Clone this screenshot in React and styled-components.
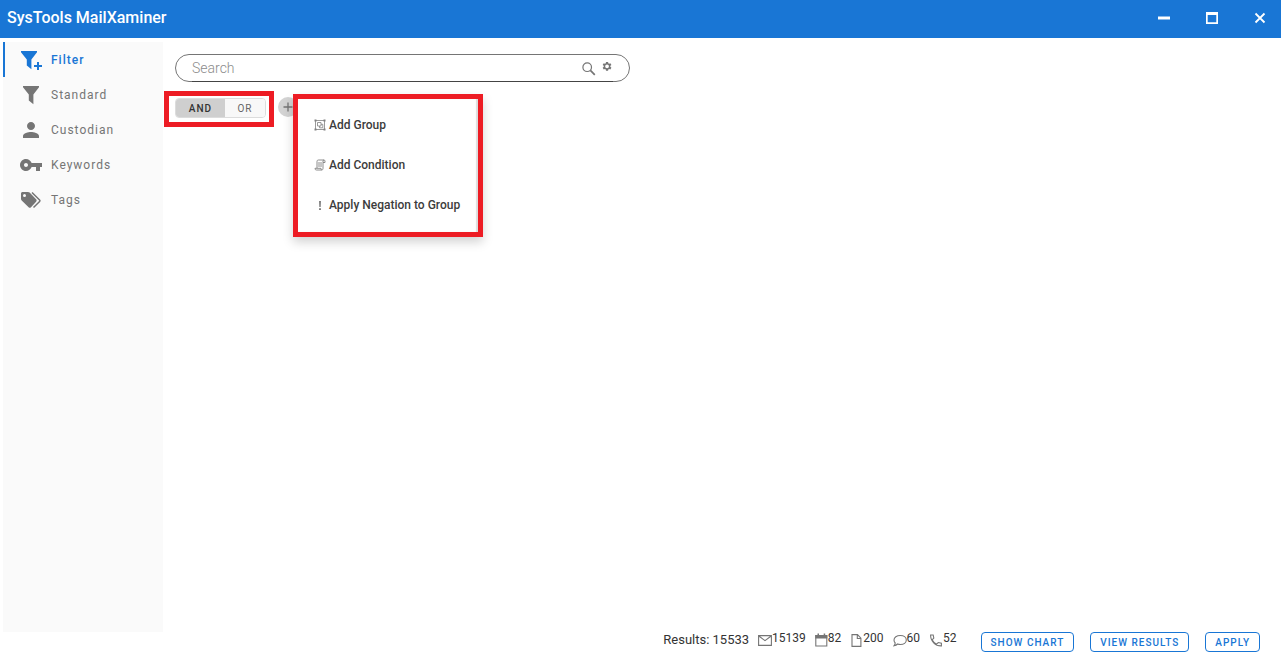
import { useState } from "react";
import styled, { createGlobalStyle } from "styled-components";

const GlobalStyle = createGlobalStyle`
  * {
    box-sizing: border-box;
  }

  body {
    margin: 0;
    background: #fff;
    color: #333;
    font-family: Roboto, "Liberation Sans", sans-serif;
    font-size: 12px;
  }

  button,
  input {
    font-family: inherit;
  }
`;

const Page = styled.div`
  display: flex;
  flex-direction: column;
  min-height: 100vh;
`;

const TitleBar = styled.header`
  display: flex;
  justify-content: space-between;
  align-items: center;
  height: 38px;
  padding: 0 9px 2px 7px;
  background: #1976d5;
  color: #fff;
`;

const Title = styled.h1`
  margin: 0;
  font-size: 16px;
  font-weight: 500;
  line-height: 24px;
`;

const WindowControls = styled.div`
  display: flex;
  gap: 24px;
`;

const IconButton = styled.button`
  display: flex;
  justify-content: center;
  align-items: center;
  width: ${({ $size }) => $size || 24}px;
  height: ${({ $size }) => $size || 24}px;
  padding: 0;
  border: none;
  background: none;
  color: inherit;
  cursor: pointer;
`;

const AddButton = styled(IconButton)`
  border-radius: 50%;
  background: #d3d3d3;
  color: #757575;
`;

const Body = styled.div`
  display: flex;
  flex: 1;
  padding: 4px 0 0 3px;
`;

const Sidebar = styled.nav`
  flex: none;
  width: 160px;
  background: #fafafa;
`;

const NavItem = styled.a`
  display: flex;
  align-items: center;
  gap: 8px;
  height: 35px;
  padding-left: 14px;
  border-left: 2px solid ${({ $active }) => ($active ? "#1976d5" : "transparent")};
  color: ${({ $active }) => ($active ? "#1976d5" : "#757575")};
  font-size: 12px;
  font-weight: ${({ $active }) => ($active ? 500 : 400)};
  letter-spacing: 1px;
  text-decoration: none;
`;

const Content = styled.main`
  flex: 1;
  padding: 12px 0 0 1px;
`;

const SearchBox = styled.form`
  width: 455px;
  height: 28px;
  margin-left: 11px;
  padding: 0 16px;
  border: 1px solid #757575;
  border-radius: 14px;
  color: #757575;
`;

const SearchField = styled.div`
  display: flex;
  align-items: center;
  height: 27px;
  border-bottom: 1px solid #444;
`;

const SearchInput = styled.input`
  flex: 1;
  min-width: 0;
  padding: 0;
  border: none;
  outline: none;
  background: none;
  color: #333;
  font-size: 14px;

  &::placeholder {
    color: #8c8c8c;
    font-weight: 300;
    opacity: 1;
  }
`;

const GroupRow = styled.div`
  position: relative;
  display: flex;
  gap: 4px;
  margin-top: 9px;
`;

const Highlight = styled.div`
  border: 5px solid #ed1c24;
`;

const ToggleHighlight = styled(Highlight)`
  height: 36px;
  padding: 2px 3px 4px 6px;
`;

const ToggleGroup = styled.div`
  display: flex;
  height: 20px;
  border: 1px solid #dcdcdc;
  border-radius: 4px;
  overflow: hidden;
`;

const Toggle = styled.button`
  width: ${({ $width }) => $width}px;
  padding: 0;
  border: none;
  background: ${({ $on }) => ($on ? "#cfcfcf" : "#f8f8f8")};
  color: ${({ $on }) => ($on ? "#333" : "#666")};
  font-size: 10px;
  font-weight: ${({ $on }) => ($on ? 500 : 400)};
  letter-spacing: 1px;
  cursor: pointer;
`;

const AddSlot = styled.div`
  padding-top: 6px;
`;

const Menu = styled(Highlight)`
  position: absolute;
  top: 3px;
  left: 129px;
  width: 190px;
  padding: 6px 2px 7px 0;
  background: #fff;
  box-shadow:
    inset -2px 0 1px #ddd,
    0 5px 10px rgba(0, 0, 0, 0.18);
`;

const MenuItem = styled.button`
  display: flex;
  align-items: center;
  gap: 3px;
  width: 100%;
  height: 40px;
  padding: 0 0 0 16px;
  border: none;
  background: none;
  color: #3c3c3c;
  font-size: 12px;
  font-weight: 500;
  text-align: left;
  white-space: nowrap;
  cursor: pointer;

  svg {
    color: #808080;
  }
`;

const Footer = styled.footer`
  display: flex;
  justify-content: flex-end;
  height: 36px;
  padding-right: 21px;
`;

const Results = styled.div`
  display: flex;
  gap: 9px;
  margin-right: 24px;
  font-size: 13px;
  line-height: 16px;
`;

const Count = styled.span`
  display: flex;
  font-size: 12px;
  line-height: 12px;

  svg {
    margin-top: 1px;
    color: #757575;
  }
`;

const Actions = styled.div`
  display: flex;
  align-items: flex-start;
  gap: 16px;
`;

const ActionButton = styled.button`
  height: 20px;
  padding: 0 9px;
  border: 1px solid #1976d5;
  border-radius: 4px;
  background: #fff;
  color: #1976d5;
  font-size: 10px;
  font-weight: 500;
  letter-spacing: 1px;
  cursor: pointer;
`;

const Svg = styled.svg`
  flex: none;
`;

function Icon({ size = 24, width, box = "0 0 24 24", fill = "currentColor", children, ...rest }) {
  return (
    <Svg
      width={width || size}
      height={size}
      viewBox={box}
      fill={fill}
      aria-hidden="true"
      {...rest}
    >
      {children}
    </Svg>
  );
}

const FUNNEL = "M0 0h16v1.3l-5.6 7.2V18.2L5.8 14.5V8.5L0 1.3z";

const navItems = [
  {
    label: "Filter",
    icon: (
      <>
        <path d={FUNNEL} transform="translate(2 3)" />
        <path d="M18 14h2v3h3v2h-3v3h-2v-3h-3v-2h3z" />
      </>
    ),
  },
  { label: "Standard", icon: <path d={FUNNEL} transform="translate(4 3)" /> },
  {
    label: "Custodian",
    icon: (
      <path d="M12 12c2.2 0 4-1.8 4-4s-1.8-4-4-4-4 1.8-4 4 1.8 4 4 4zm0 2c-2.7 0-8 1.3-8 4v2h16v-2c0-2.7-5.3-4-8-4z" />
    ),
  },
  {
    label: "Keywords",
    icon: (
      <path d="M12.65 10C11.83 7.67 9.61 6 7 6c-3.31 0-6 2.69-6 6s2.69 6 6 6c2.61 0 4.83-1.67 5.65-4H17v4h4v-4h2v-4H12.65zM7 14c-1.1 0-2-.9-2-2s.9-2 2-2 2 .9 2 2-.9 2-2 2z" />
    ),
  },
  {
    label: "Tags",
    icon: (
      <>
        <path
          fillRule="evenodd"
          d="M2 5.5C2 4.7 2.7 4 3.5 4H9c.6 0 1.2.2 1.600.6l6.500 6.700c.7.7.7 1.700 0 2.400L12 19.200c-.7.7-1.700.7-2.400 0L2.700 12.600c-.4-.4-.7-1-.7-1.600zM5.500 6a1.500 1.500 0 1 0 0 3 1.500 1.500 0 0 0 0-3z"
        />
        <path
          d="M13 4.500l7.600 7.500c.5.500.5 1 0 1.500L14.500 19.500"
          fill="none"
          stroke="currentColor"
          strokeWidth="1.5"
        />
      </>
    ),
  },
];

const menuItems = [
  {
    label: "Add Group",
    icon: (
      <g fill="none" stroke="currentColor">
        <path d="M1.5 1v10M10.5 1v10M2 1.5h8M2 10.5h8" strokeWidth=".8" />
        <path d="M3.5 3.5H7V7H3.500zM5.500 7v1.800h3.300V5.300H7" strokeWidth=".8" />
        <path d="M.5 1.500h2M9.500 1.500h2M.5 10.500h2M9.500 10.500h2" strokeWidth="1.8" />
      </g>
    ),
  },
  {
    label: "Add Condition",
    icon: (
      <g fill="none" stroke="currentColor" strokeWidth=".9">
        <path d="M3 9V2.500C3 1.500 3.500 1 4.500 1h5.500c.7 0 1 .5 1 1v1.500H9" />
        <path d="M9 3.500V9.500c0 1-.5 1.500-1.500 1.500H2.500C1.500 11 1 10.500 1 9.300h6c0 1 .3 1.700 1 1.700" />
        <path d="M9 3.500V2c0-.5.3-1 1-1M5 3v5M7 3v5" />
      </g>
    ),
  },
  {
    label: "Apply Negation to Group",
    icon: <path d="M5 2h2L6.700 8H5.300zM5 9.200h2V11H5z" />,
  },
];

const counts = [
  {
    label: "Emails",
    value: 15139,
    width: 14,
    icon: <path d="M.6 2.600h12.800v9.800H.6zM.8 3l6.200 4.600L13.200 3" />,
  },
  {
    label: "Events",
    value: 82,
    width: 13,
    icon: (
      <>
        <path d="M.8 2.500h11v10.500H.8z" />
        <path
          d="M.3 2h12v3.500H.3zM2.500 0.500h1.500V2H2.500zM8.700 0.500h1.500V2H8.700z"
          fill="currentColor"
          stroke="none"
        />
      </>
    ),
  },
  {
    label: "Documents",
    value: 200,
    width: 13,
    icon: <path d="M2 1.600h5.500l3.400 3.600v8.200H2zM7.300 1.600v3.900h3.600" />,
  },
  {
    label: "Chats",
    value: 60,
    width: 14,
    icon: (
      <path d="M7.300 2.500c3.500 0 6 1.900 6 4.500s-2.500 4.500-6 4.500c-1 0-1.900-.2-2.700-.5-.8.8-2 1.500-3.600 1.800.7-.8 1.100-1.700 1.200-2.800C1.400 9.200 1 8.200 1 7c0-2.600 2.700-4.500 6.300-4.500z" />
    ),
  },
  {
    label: "Calls",
    value: 52,
    width: 14,
    icon: (
      <path d="M1.600 2h2.600l.6 3.100-1.700 1.700c1 2 2.300 3.400 4.400 4.400l1.800-1.700 3.100.6v2.800c-6 .3-11-5-10.800-10.900z" />
    ),
  },
];

export default function App() {
  const [operator, setOperator] = useState("AND");
  const [query, setQuery] = useState("");

  return (
    <Page>
      <GlobalStyle />
      <TitleBar>
        <Title>SysTools MailXaminer</Title>
        <WindowControls>
          <IconButton aria-label="Minimize">
            <Icon>
              <path d="M6 10.500h12v3H6z" />
            </Icon>
          </IconButton>
          <IconButton aria-label="Maximize">
            <Icon>
              <path fillRule="evenodd" d="M6 6h12v12H6zM7.700 9v7.300h8.600V9z" />
            </Icon>
          </IconButton>
          <IconButton aria-label="Close">
            <Icon fill="none" stroke="currentColor" strokeWidth="1.8">
              <path d="M7.500 7.500l9 9M16.500 7.500l-9 9" />
            </Icon>
          </IconButton>
        </WindowControls>
      </TitleBar>

      <Body>
        <Sidebar>
          {navItems.map(({ label, icon }) => (
            <NavItem key={label} href={`#${label.toLowerCase()}`} $active={label === "Filter"}>
              <Icon>{icon}</Icon>
              {label}
            </NavItem>
          ))}
        </Sidebar>

        <Content>
          <SearchBox role="search" onSubmit={(e) => e.preventDefault()}>
            <SearchField>
              <SearchInput
                aria-label="Search"
                placeholder="Search"
                value={query}
                onChange={(e) => setQuery(e.target.value)}
              />
              <IconButton type="submit" aria-label="Run search">
                <Icon size={16} box="0 0 16 16" fill="none" stroke="currentColor">
                  <circle cx="6.200" cy="7.200" r="4.300" strokeWidth="1.200" />
                  <path d="M9.400 10.400l4.400 4.400" strokeWidth="1.700" />
                </Icon>
              </IconButton>
              <IconButton $size={12} type="button" aria-label="Search settings">
                <Icon size={14} width={12} box="0 0 24 28">
                  <path
                    fillRule="evenodd"
                    transform="translate(2 1) scale(.84)"
                    d="M9.500 1h5l.5 3.200 1.900 1.100 3-1.200 2.500 4.300-2.600 2v2.200l2.600 2-2.500 4.300-3-1.200-1.900 1.100-.5 3.200h-5L9 18.800l-1.900-1.100-3 1.200-2.500-4.300 2.600-2v-2.200l-2.600-2 2.500-4.300 3 1.200L9 4.200zM12 7a4.500 4.500 0 1 0 0 9 4.500 4.500 0 0 0 0-9z"
                  />
                </Icon>
              </IconButton>
            </SearchField>
          </SearchBox>

          <GroupRow>
            <ToggleHighlight>
              <ToggleGroup role="group" aria-label="Group operator">
                <Toggle $width={49} $on={operator === "AND"} onClick={() => setOperator("AND")}>
                  AND
                </Toggle>
                <Toggle $width={40} $on={operator === "OR"} onClick={() => setOperator("OR")}>
                  OR
                </Toggle>
              </ToggleGroup>
            </ToggleHighlight>
            <AddSlot>
              <AddButton $size={20} aria-label="Add">
                <Icon size={12} box="0 0 12 12" fill="none" stroke="currentColor" strokeWidth="1.3">
                  <path d="M6 1.500v9M1.500 6h9" />
                </Icon>
              </AddButton>
            </AddSlot>
            <Menu role="menu">
              {menuItems.map(({ label, icon }) => (
                <MenuItem key={label} role="menuitem">
                  <Icon size={12} box="0 0 12 12">
                    {icon}
                  </Icon>
                  {label}
                </MenuItem>
              ))}
            </Menu>
          </GroupRow>
        </Content>
      </Body>

      <Footer>
        <Results>
          <span>Results: 15533</span>
          {counts.map(({ label, value, width, icon }) => (
            <Count key={label} title={label}>
              <Icon
                size={14}
                width={width}
                box={`0 0 ${width} 14`}
                fill="none"
                stroke="currentColor"
                strokeWidth="1.1"
              >
                {icon}
              </Icon>
              {value}
            </Count>
          ))}
        </Results>
        <Actions>
          <ActionButton>SHOW CHART</ActionButton>
          <ActionButton>VIEW RESULTS</ActionButton>
          <ActionButton>APPLY</ActionButton>
        </Actions>
      </Footer>
    </Page>
  );
}
